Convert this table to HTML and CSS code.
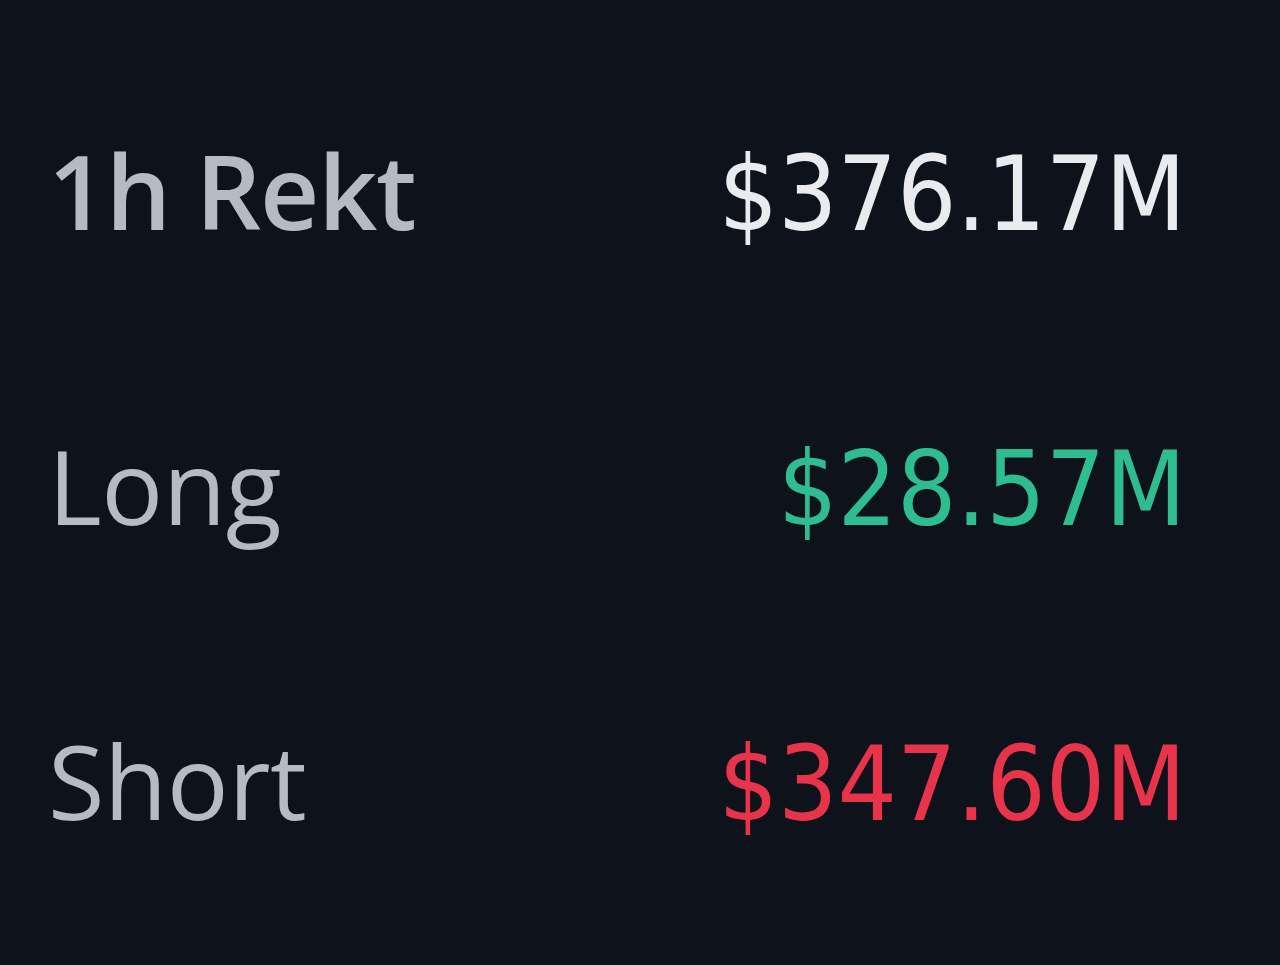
FILE: index.html
```html
<!DOCTYPE html>
<html>
<head>
<meta charset="utf-8">
<link rel="stylesheet" href="styles.css">
</head>
<body>
<div class="panel">
  <div class="row">
    <span class="label label-bold">1h Rekt</span>
    <span class="value value-total">$376.17M</span>
  </div>
  <div class="row">
    <span class="label">Long</span>
    <span class="value value-long">$28.57M</span>
  </div>
  <div class="row">
    <span class="label">Short</span>
    <span class="value value-short">$347.60M</span>
  </div>
</div>
</body>
</html>
```
FILE: styles.css
```css
html, body {
  margin: 0;
  padding: 0;
  background: #0e121b;
  height: 100%;
}
body {
  width: 1280px;
  height: 965px;
  overflow: hidden;
}
.panel {
  display: flex;
  flex-direction: column;
  padding: 115px 94px 0 48px;
}
.row {
  display: flex;
  justify-content: space-between;
  align-items: baseline;
  height: 295px;
  line-height: 150px;
}
.label {
  font-family: "Open Sans", sans-serif;
  font-size: 103px;
  letter-spacing: -0.4px;
  color: #b6bac1;
  font-weight: 400;
}
.label-bold {
  font-weight: 600;
  letter-spacing: -1.2px;
}
.value {
  font-family: "DejaVu Sans Condensed", "DejaVu Sans", sans-serif;
  font-size: 104px;
  font-weight: 400;
}
.value-total { color: #e9ebef; }
.value-long { color: #2ebd91; }
.value-short { color: #e8344a; }
```
